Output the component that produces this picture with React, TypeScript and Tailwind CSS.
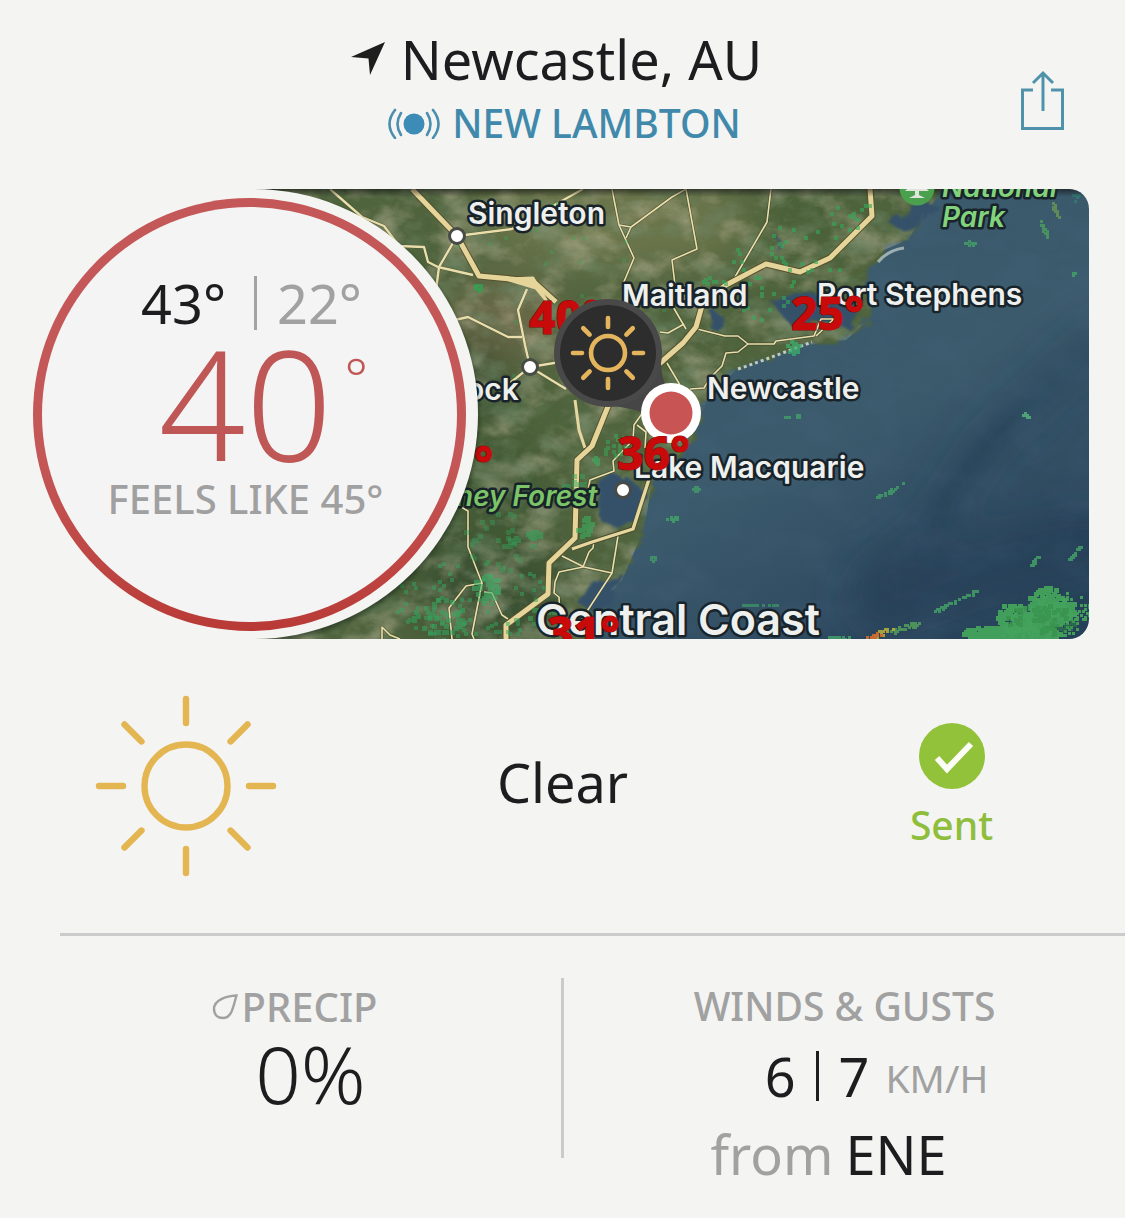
import React from "react";

type Point = [number, number];

function createRandom(seed: number) {
  let state = seed;
  return () => {
    state = (state * 1664525 + 1013904223) % 4294967296;
    return state / 4294967296;
  };
}

// Scatters square radar cells around a centre, denser towards the middle.
function radarCells(seed: number, cx: number, cy: number, rx: number, ry: number, count: number, slope = 0): Point[] {
  const random = createRandom(seed);
  return Array.from({ length: count }, () => {
    const angle = random() * Math.PI * 2;
    const reach = Math.sqrt(random());
    const x = Math.cos(angle) * reach * rx;
    const y = Math.sin(angle) * reach * ry + x * slope;
    return [Math.round((cx + x) / 2) * 2, Math.round((cy + y) / 2) * 2];
  });
}

const radarGroups: { cells: Point[]; size: number; color: string; opacity: number }[] = [
  { cells: radarCells(3, 470, 600, 80, 42, 80), size: 4, color: "#35a45c", opacity: 0.5 },
  { cells: radarCells(4, 440, 615, 30, 18, 40), size: 5, color: "#35a45c", opacity: 0.6 },
  { cells: radarCells(5, 484, 585, 14, 14, 40), size: 5, color: "#3cb068", opacity: 0.6 },
  { cells: radarCells(91, 500, 540, 40, 30, 30), size: 5, color: "#35a45c", opacity: 0.4 },
  { cells: radarCells(92, 532, 533, 6, 4, 12), size: 5, color: "#35a45c", opacity: 0.6 },
  { cells: radarCells(93, 512, 538, 5, 3, 10), size: 5, color: "#35a45c", opacity: 0.5 },
  { cells: radarCells(8, 583, 525, 9, 10, 24), size: 5, color: "#3cae5e", opacity: 0.6 },
  { cells: radarCells(9, 572, 480, 12, 8, 14), size: 5, color: "#35a45c", opacity: 0.5 },
  { cells: radarCells(12, 595, 458, 3, 5, 10), size: 4, color: "#3cae5e", opacity: 0.6 },
  { cells: radarCells(15, 613, 445, 14, 12, 16), size: 4, color: "#3cae5e", opacity: 0.5 },
  { cells: radarCells(18, 540, 610, 16, 6, 24, -0.4), size: 5, color: "#3cae5e", opacity: 0.5 },
  { cells: radarCells(21, 477, 286, 4, 4, 16), size: 3, color: "#2fa552", opacity: 0.8 },
  { cells: radarCells(24, 790, 258, 60, 34, 34), size: 4, color: "#35a85a", opacity: 0.6 },
  { cells: radarCells(27, 848, 205, 26, 26, 14), size: 4, color: "#35a85a", opacity: 0.6 },
  { cells: radarCells(26, 712, 282, 14, 8, 12), size: 4, color: "#35a85a", opacity: 0.6 },
  { cells: radarCells(28, 760, 300, 30, 20, 14), size: 4, color: "#35a85a", opacity: 0.6 },
  { cells: radarCells(29, 792, 346, 7, 7, 14), size: 4, color: "#3cae70", opacity: 0.75 },
  { cells: radarCells(30, 556, 205, 8, 7, 14), size: 4, color: "#35a85a", opacity: 0.6 },
  { cells: radarCells(32, 560, 300, 150, 100, 24), size: 4, color: "#35a85a", opacity: 0.3 },
  { cells: radarCells(33, 1046, 614, 28, 12, 230, -0.25), size: 5, color: "#44a35c", opacity: 0.95 },
  { cells: radarCells(31, 1012, 616, 16, 14, 90), size: 5, color: "#44a35c", opacity: 0.95 },
  { cells: radarCells(34, 1010, 632, 48, 8, 240), size: 5, color: "#44a35c", opacity: 0.95 },
  { cells: radarCells(37, 1044, 600, 18, 14, 110), size: 5, color: "#44a35c", opacity: 0.95 },
  { cells: radarCells(36, 1046, 618, 46, 24, 150, -0.2), size: 3, color: "#44a35c", opacity: 0.95 },
  { cells: radarCells(38, 1040, 618, 36, 14, 60), size: 5, color: "#338c47", opacity: 0.5 },
  { cells: radarCells(39, 955, 600, 26, 2, 36, -0.48), size: 3, color: "#43a567", opacity: 0.8 },
  { cells: radarCells(42, 902, 627, 18, 3, 34, -0.3), size: 3, color: "#55a55c", opacity: 0.8 },
  { cells: radarCells(41, 882, 631, 10, 3, 16, -0.3), size: 3, color: "#b3ab3c", opacity: 0.9 },
  { cells: radarCells(43, 872, 635, 9, 2, 14, -0.3), size: 3, color: "#cc6c30", opacity: 0.95 },
  { cells: radarCells(45, 890, 490, 17, 2, 20, -0.5), size: 3, color: "#43a567", opacity: 0.75 },
  { cells: radarCells(48, 1034, 560, 4, 2, 14, -1.2), size: 3, color: "#43a567", opacity: 0.8 },
  { cells: radarCells(50, 1074, 552, 6, 2, 18, -1.1), size: 3, color: "#43a567", opacity: 0.8 },
  { cells: radarCells(53, 1025, 414, 4, 2, 14), size: 3, color: "#55b17b", opacity: 0.85 },
  { cells: radarCells(55, 786, 415, 2, 1, 5), size: 3, color: "#43a567", opacity: 0.75 },
  { cells: radarCells(56, 797, 415, 2, 1, 5), size: 3, color: "#43a567", opacity: 0.75 },
  { cells: radarCells(57, 672, 518, 6, 2, 16), size: 3, color: "#43a567", opacity: 0.8 },
  { cells: radarCells(59, 695, 488, 4, 2, 10), size: 3, color: "#43a567", opacity: 0.7 },
  { cells: radarCells(61, 652, 557, 3, 3, 8), size: 3, color: "#43a567", opacity: 0.7 },
  { cells: radarCells(63, 757, 604, 20, 1, 18), size: 3, color: "#3f9a68", opacity: 0.7 },
  { cells: radarCells(64, 838, 637, 10, 2, 24), size: 3, color: "#43a567", opacity: 0.8 },
  { cells: radarCells(65, 1043, 228, 4, 3, 22, 2), size: 3, color: "#4fa35c", opacity: 0.75 },
  { cells: radarCells(67, 1054, 208, 4, 3, 24, 2), size: 3, color: "#6d9a52", opacity: 0.75 },
  { cells: radarCells(70, 969, 242, 5, 2, 8), size: 3, color: "#43a567", opacity: 0.75 },
  { cells: radarCells(72, 1073, 271, 1, 3, 6), size: 3, color: "#43a567", opacity: 0.8 },
  { cells: radarCells(73, 1074, 196, 5, 4, 8), size: 3, color: "#2f8a78", opacity: 0.6 },
];

const minorRoads = [
  "M330 189 L362 217 L384 226 L399 246 L424 247 L428 262 L438 267 L473 275",
  "M457 236 L439 267 L436 290",
  "M457 236 L512 229 L583 189",
  "M527 289 L518 310 L525 345 L530 367",
  "M455 320 L468 317 L508 337 L522 337",
  "M530 367 L506 386",
  "M530 367 L560 362",
  "M530 367 L566 389",
  "M612 189 L619 225 L634 258 L623 284 L640 320",
  "M619 225 L631 227 L626 238",
  "M631 227 L672 197 L686 189 L697 249 L672 260 L675 285 L672 305 L686 329",
  "M771 189 L767 222 L735 277",
  "M697 329 L725 336 L738 336 L748 344 L774 344 L776 341 L814 336 L821 319 L834 319 L816 336",
  "M748 344 L738 352 L726 353 L722 366 L710 378 L704 388 L690 389",
  "M660 332 L668 333 L684 324",
  "M667 363 L680 385",
  "M648 405 L634 425 L633 440 L613 461 L614 471 L590 480 L588 490",
  "M637 425 L646 432 L645 448",
  "M461 507 L468 511 L468 547 L482 583 L466 586 L449 608 L452 639",
  "M482 583 L472 634 L474 639",
  "M484 592 L492 593 L502 615 L508 619",
  "M382 627 L382 639 M382 627 L390 635 L400 639",
  "M618 536 L612 573 L580 622",
  "M612 573 L584 567 L562 556",
  "M594 541 L593 548 L589 552 L583 567 L559 572 L555 582 L554 593 L559 597 L560 618",
];

const highways = [
  "M412 189 L457 236 L479 276 L533 281 L556 302",
  "M870 189 L872 216 L830 258 L800 272 L766 264 L726 285 L703 302 L696 327 L683 343 L650 372",
  "M609 404 L592 446 L577 460 L575 538 L549 563 L548 594 L506 625 L506 639",
];

const placeLabels = [
  { text: "Singleton", x: 468, y: 224, className: "fill-[#eef0ee] text-[30px] font-semibold" },
  { text: "Maitland", x: 622, y: 306, className: "fill-[#eef0ee] text-[30px] font-semibold" },
  { text: "Port Stephens", x: 817, y: 305, className: "fill-[#eef0ee] text-[30px] font-semibold" },
  { text: "Newcastle", x: 707, y: 399, className: "fill-[#eef0ee] text-[30px] font-semibold" },
  { text: "Lake Macquarie", x: 634, y: 478, className: "fill-[#eef0ee] text-[30px] font-semibold" },
  { text: "ock", x: 466, y: 400, className: "fill-[#eef0ee] text-[30px] font-semibold" },
  { text: "Central Coast", x: 536, y: 635, className: "fill-[#eef0ee] text-[43px] font-semibold" },
  { text: "National", x: 942, y: 197, className: "fill-[#83d27c] text-[28px] font-semibold italic" },
  { text: "Park", x: 942, y: 227, className: "fill-[#83d27c] text-[28px] font-semibold italic" },
  { text: "ney Forest", x: 456, y: 506, className: "fill-[#7cc468] text-[28px] font-semibold italic" },
];

const temperatures = [
  { text: "40°", x: 529, y: 334 },
  { text: "25°", x: 791, y: 330 },
  { text: "36°", x: 617, y: 470 },
  { text: "7°", x: 447, y: 480 },
  { text: "31°", x: 547, y: 650 },
];

const RAY_ANGLES = [0, 45, 90, 135, 180, 225, 270, 315];

const LAND =
  "M240 180 H952 L925 212 L908 240 L884 250 L870 264 L864 284 L872 302 L866 322 L846 340 L815 344 L778 354 L738 368 L722 384 L706 402 L700 424 L690 444 L664 470 L650 492 L646 520 L636 548 L622 580 L600 604 L586 645 H240 Z";

function SunIcon({ className }: { className: string }) {
  return (
    <svg viewBox="-92 -92 184 184" className={className} fill="none" stroke="#e4b652" strokeWidth="6.4" strokeLinecap="round" aria-hidden="true">
      <circle r="41.5" />
      {RAY_ANGLES.map((angle) => (
        <line key={angle} x1="0" y1="-87" x2="0" y2="-63" transform={`rotate(${angle})`} />
      ))}
    </svg>
  );
}

function WeatherMap() {
  return (
    <svg viewBox="253 189 836 450" preserveAspectRatio="xMinYMid slice" className="block h-full w-full font-['Inter',sans-serif]" role="img" aria-label="Satellite map around Newcastle">
      <defs>
        <filter id="terrain-light" x="0" y="0" width="100%" height="100%">
          <feTurbulence type="fractalNoise" baseFrequency="0.025 0.035" numOctaves="5" seed="7" />
          <feColorMatrix values="0 0 0 0 0.56  0 0 0 0 0.52  0 0 0 0 0.37  3 0 0 0 -1.35" />
        </filter>
        <filter id="terrain-dark" x="0" y="0" width="100%" height="100%">
          <feTurbulence type="fractalNoise" baseFrequency="0.03 0.05" numOctaves="5" seed="21" />
          <feColorMatrix values="0 0 0 0 0.16  0 0 0 0 0.25  0 0 0 0 0.14  0 3 0 0 -1.4" />
        </filter>
        <filter id="sea-noise" x="0" y="0" width="100%" height="100%">
          <feTurbulence type="fractalNoise" baseFrequency="0.02 0.03" numOctaves="4" seed="4" />
          <feColorMatrix values="0 0 0 0 0.1  0 0 0 0 0.17  0 0 0 0 0.28  0 1.2 0 0 -0.5" />
        </filter>
        <filter id="soft-edge" x="-5%" y="-5%" width="110%" height="110%">
          <feTurbulence type="fractalNoise" baseFrequency="0.06" numOctaves="3" seed="2" result="noise" />
          <feDisplacementMap in="SourceGraphic" in2="noise" scale="14" />
          <feGaussianBlur stdDeviation="1.2" />
        </filter>
        <filter id="broad-blur" x="-40%" y="-40%" width="180%" height="180%">
          <feGaussianBlur stdDeviation="22" />
        </filter>
        <filter id="patch-blur" x="-60%" y="-60%" width="220%" height="220%">
          <feGaussianBlur stdDeviation="6" />
        </filter>
        <filter id="dial-shadow" x="-10%" y="-10%" width="120%" height="120%">
          <feGaussianBlur stdDeviation="2" />
        </filter>
        <linearGradient id="sea" x1="0" y1="0" x2="1" y2="1">
          <stop offset="0" stopColor="#3a5a6c" />
          <stop offset="0.62" stopColor="#3b5a6c" />
          <stop offset="0.85" stopColor="#2e495f" />
          <stop offset="1" stopColor="#233e56" />
        </linearGradient>
        <clipPath id="land-clip">
          <path d={LAND} />
        </clipPath>
        <linearGradient id="map-top" x1="0" y1="0" x2="0" y2="1">
          <stop offset="0" stopColor="#111" stopOpacity="0.6" />
          <stop offset="1" stopColor="#111" stopOpacity="0" />
        </linearGradient>
      </defs>

      <rect x="249" y="189" width="840" height="450" fill="url(#sea)" />
      <g filter="url(#broad-blur)" fill="none" stroke="#213a52" opacity="0.7">
        <path d="M1110 330 L990 440 L930 530 L860 590" strokeWidth="18" />
        <path d="M1110 535 L1000 560 L860 610" strokeWidth="36" />
      </g>
      <path d="M1022 410 L990 440 L950 490 L925 545" fill="none" stroke="#233c53" strokeWidth="8" opacity="0.55" filter="url(#patch-blur)" />
      <rect x="249" y="189" width="840" height="450" filter="url(#sea-noise)" opacity="0.25" />

      <path d={LAND} fill="#50643d" filter="url(#soft-edge)" />
      <g clipPath="url(#land-clip)">
        <g filter="url(#broad-blur)">
          <ellipse cx="620" cy="220" rx="150" ry="50" fill="#6c764c" />
          <ellipse cx="500" cy="320" rx="60" ry="40" fill="#6c6a48" />
          <ellipse cx="490" cy="590" rx="80" ry="60" fill="#3b5132" />
          <ellipse cx="500" cy="490" rx="50" ry="60" fill="#435a35" />
          <ellipse cx="800" cy="220" rx="60" ry="30" fill="#486139" />
          <ellipse cx="480" cy="370" rx="16" ry="40" fill="#263d26" />
        </g>
        <rect x="249" y="189" width="840" height="450" filter="url(#terrain-light)" opacity="0.45" />
        <rect x="249" y="189" width="840" height="450" filter="url(#terrain-dark)" opacity="0.5" />
      </g>

      <g fill="#35516a" filter="url(#soft-edge)">
        <path d="M770 300 L800 290 L840 300 L862 310 L850 330 L820 318 L790 325 Z" />
        <path d="M598 482 L625 475 L645 492 L638 520 L620 530 L600 520 Z" />
        <path d="M575 600 L600 580 L625 575 L612 600 L590 610 Z" />
        <path d="M712 310 L724 318 L718 330 L708 326 Z" />
        <path d="M775 232 L780 244 L776 252 Z" />
        <path d="M888 222 L925 202 L940 208 L905 232 Z" />
      </g>
      <path d="M738 369 C765 360 790 350 812 342" fill="none" stroke="#d4dcd9" strokeWidth="3" strokeDasharray="3 3" opacity="0.85" />
      <path d="M878 262 Q888 250 904 248" fill="none" stroke="#b8c4c5" strokeWidth="3" opacity="0.8" />

      <g fill="none" strokeLinejoin="round">
        {minorRoads.map((d) => (
          <path key={d} d={d} stroke="#34391f" strokeWidth="3" opacity="0.55" />
        ))}
        {minorRoads.map((d, index) => (
          <path key={d} d={d} stroke="#eadfac" strokeWidth={index < 8 ? 2.4 : 1.6} />
        ))}
        <path d="M572 549 L592 542 L633 529 L650 476" stroke="#4b4829" strokeWidth="5" />
        <path d="M572 549 L592 542 L633 529 L650 476" stroke="#e5d7a0" strokeWidth="3.4" />
        <path d="M575 400 L579 430 L585 448" stroke="#e5d7a0" strokeWidth="3" />
        {highways.map((d) => (
          <path key={d} d={d} stroke="#55512c" strokeWidth="7" />
        ))}
        {highways.map((d) => (
          <path key={d} d={d} stroke="#e6d59a" strokeWidth="5" />
        ))}
        <path d="M506 279 L533 278 L546 300 L536 288 Z" fill="#e6d59a" stroke="#e6d59a" strokeWidth="3" />
      </g>

      {radarGroups.map((group, groupIndex) => (
        <g key={groupIndex} fill={group.color} opacity={group.opacity}>
          {group.cells.map(([x, y], index) => (
            <rect key={index} x={x} y={y} width={group.size} height={group.size} />
          ))}
        </g>
      ))}

      <rect x="249" y="189" width="840" height="8" fill="url(#map-top)" />

      <circle cx="917" cy="188" r="17.5" fill="#4aa04c" />
      <path d="M917 180 L929 191 H919 V195 L925 198 H909 L915 195 V191 H905 Z" fill="#dfe5dc" />

      <g fill="#fff" stroke="#474b45" strokeWidth="3">
        <circle cx="457" cy="236" r="7.5" />
        <circle cx="530" cy="367" r="7.5" />
        <circle cx="623" cy="490" r="7.5" />
      </g>

      <g stroke="#18232a" strokeWidth="5" strokeLinejoin="round" paintOrder="stroke">
        {placeLabels.map((label) => (
          <text key={label.text} x={label.x} y={label.y} className={label.className}>
            {label.text}
          </text>
        ))}
      </g>

      <path d="M600 404 Q632 408 648 414 L666 385 Q660 375 661 350 Z" fill="#464646" />
      <circle cx="671" cy="413" r="30" fill="#fff" />
      <circle cx="671" cy="413" r="21.5" fill="#c85454" />

      <g fill="#c90a0a" stroke="#8a0606" strokeWidth="1" paintOrder="stroke" className="font-['Noto_Sans',sans-serif] text-[46px] font-extrabold">
        {temperatures.map((label) => (
          <text key={label.text} x={label.x} y={label.y}>
            {label.text}
          </text>
        ))}
      </g>

      <circle cx="608" cy="353" r="54" fill="#494949" />
      <circle cx="608" cy="353" r="48" fill="#2d2d2d" />
      <g transform="translate(608 353)" fill="none" stroke="#e4b55c" strokeWidth="4.6" strokeLinecap="round">
        <circle r="17" />
        {RAY_ANGLES.map((angle) => (
          <line key={angle} x1="0" y1="-26" x2="0" y2="-35" transform={`rotate(${angle})`} />
        ))}
      </g>

      <circle cx="254" cy="417" r="225" fill="#0c1a0c" opacity="0.5" filter="url(#dial-shadow)" />
    </svg>
  );
}

function Header() {
  return (
    <header className="grid grid-cols-[1fr_auto_1fr] items-start px-12 pt-[27px]">
      <div />
      <div className="flex flex-col items-center">
        <h1 className="flex items-center gap-4 pr-3 text-[54px] leading-16">
          <svg viewBox="0 0 34 34" className="size-[34px]" aria-hidden="true">
            <path d="M0 15 L34 0 L19 33 L17.500 16.500 Z" fill="#1e1e1e" />
          </svg>
          Newcastle, AU
        </h1>
        <a href="#station" className="flex items-center gap-3 pl-1 text-[39px] leading-16 font-medium text-[#4189ab]">
          <svg viewBox="0 0 52 32" className="h-8 w-[52px]" fill="none" stroke="#4b8fae" strokeWidth="2.600" strokeLinecap="round" aria-hidden="true">
            <circle cx="26" cy="17" r="10.500" fill="#3d8bb7" stroke="none" />
            <path d="M13 6 Q6 17 13 28 M7 3 Q-4 17 7 31 M39 6 Q46 17 39 28 M45 3 Q56 17 45 31" />
          </svg>
          NEW LAMBTON
        </a>
      </div>
      <button type="button" aria-label="Share" className="mt-[42px] mr-3 justify-self-end">
        <svg viewBox="0 0 44 62" className="h-[62px] w-11" fill="none" stroke="#4e93ab" strokeWidth="3" aria-hidden="true">
          <path d="M12 21 H1.500 V59.500 H41.500 V21 H30 M22 42 V4 M12 14 L22 4 L32 14" />
        </svg>
      </button>
    </header>
  );
}

function TemperatureDial() {
  return (
    <div className="z-10 size-[450px] shrink-0 rounded-full bg-[#f4f5f3] pt-[9px] pr-3 pb-2 pl-[5px]">
      <div className="size-full rounded-full bg-linear-to-b from-[#c45757] from-60% to-[#b93a36] p-[9px]">
        <div className="flex size-full flex-col items-center rounded-full bg-[#f4f4f4] pt-16">
          <div className="flex items-center gap-7 pl-1 text-[54px] leading-16">
            <span>43°</span>
            <span className="flex items-center gap-5">
              <span className="h-[54px] w-[3px] bg-[#a3a3a3]" />
              <span className="text-[#a1a1a1]">22°</span>
            </span>
          </div>
          <div className="flex items-start gap-3 pl-7 font-light text-[#bf5757]">
            <span className="text-[152px] leading-[136px]">40</span>
            <span className="text-[56px] leading-21">°</span>
          </div>
          <div className="pr-2 text-[40px] leading-14 font-medium text-[#a0a0a0]">FEELS LIKE 45°</div>
        </div>
      </div>
    </div>
  );
}

export default function App() {
  return (
    <main className="min-h-screen bg-[#f4f4f3] font-['Noto_Sans',sans-serif] text-[#1d1d1f]">
      <Header />

      <section className="mt-[34px] flex items-center pr-9 pl-7">
        <TemperatureDial />
        <div className="-ml-[225px] h-[450px] min-w-0 flex-1 overflow-hidden rounded-r-[20px]">
          <WeatherMap />
        </div>
      </section>

      <section className="grid h-[294px] grid-cols-3 items-center">
        <div className="flex justify-center pr-1">
          <SunIcon className="size-[184px]" />
        </div>
        <p className="pb-2 text-center text-[54px] leading-16">Clear</p>
        <button type="button" className="flex flex-col items-center gap-2 pt-1 pl-7 text-[39px] leading-14 font-medium text-[#8fbd3c]">
          <svg viewBox="0 0 66 66" className="size-[66px]" aria-hidden="true">
            <circle cx="33" cy="33" r="33" fill="#92c23a" />
            <path d="M18 35 L28 46 L52 21" fill="none" stroke="#fbfdf6" strokeWidth="6" />
          </svg>
          Sent
        </button>
      </section>

      <section className="ml-[60px] grid grid-cols-[504px_1fr] border-t-[3px] border-[#cbcbcb] pt-[42px]">
        <div className="flex h-[180px] flex-col items-center border-r-[3px] border-[#cbcbcb]">
          <h2 className="flex items-center gap-1 pt-px pr-8 text-[40px] leading-14 font-medium text-[#a1a1a1]">
            <svg viewBox="0 0 26 26" className="size-[26px]" fill="none" stroke="#a1a1a1" strokeWidth="2.400" aria-hidden="true">
              <path d="M24.500 1.500 C14 2 2 6 2 15 C2 21 6 24 11 24 C20 24 21 13 24.500 1.500 Z" />
            </svg>
            PRECIP
          </h2>
          <p className="text-[80px] leading-19 font-light">0%</p>
        </div>
        <div className="flex flex-col items-center">
          <h2 className="text-[39px] leading-14 font-medium text-[#a1a1a1]">WINDS &amp; GUSTS</h2>
          <p className="mt-[10px] flex items-center pl-16 text-[54px] leading-16">
            6
            <span className="mx-5 h-[50px] w-[3px] bg-[#1d1d1f]" />
            7<span className="pt-1 pl-4 text-[39px] leading-14 text-[#a1a1a1]">KM/H</span>
          </p>
          <p className="mt-[14px] flex gap-3 pr-8 text-[54px] leading-16">
            <span className="text-[#a1a1a1]">from</span>
            <span>ENE</span>
          </p>
        </div>
      </section>
    </main>
  );
}
